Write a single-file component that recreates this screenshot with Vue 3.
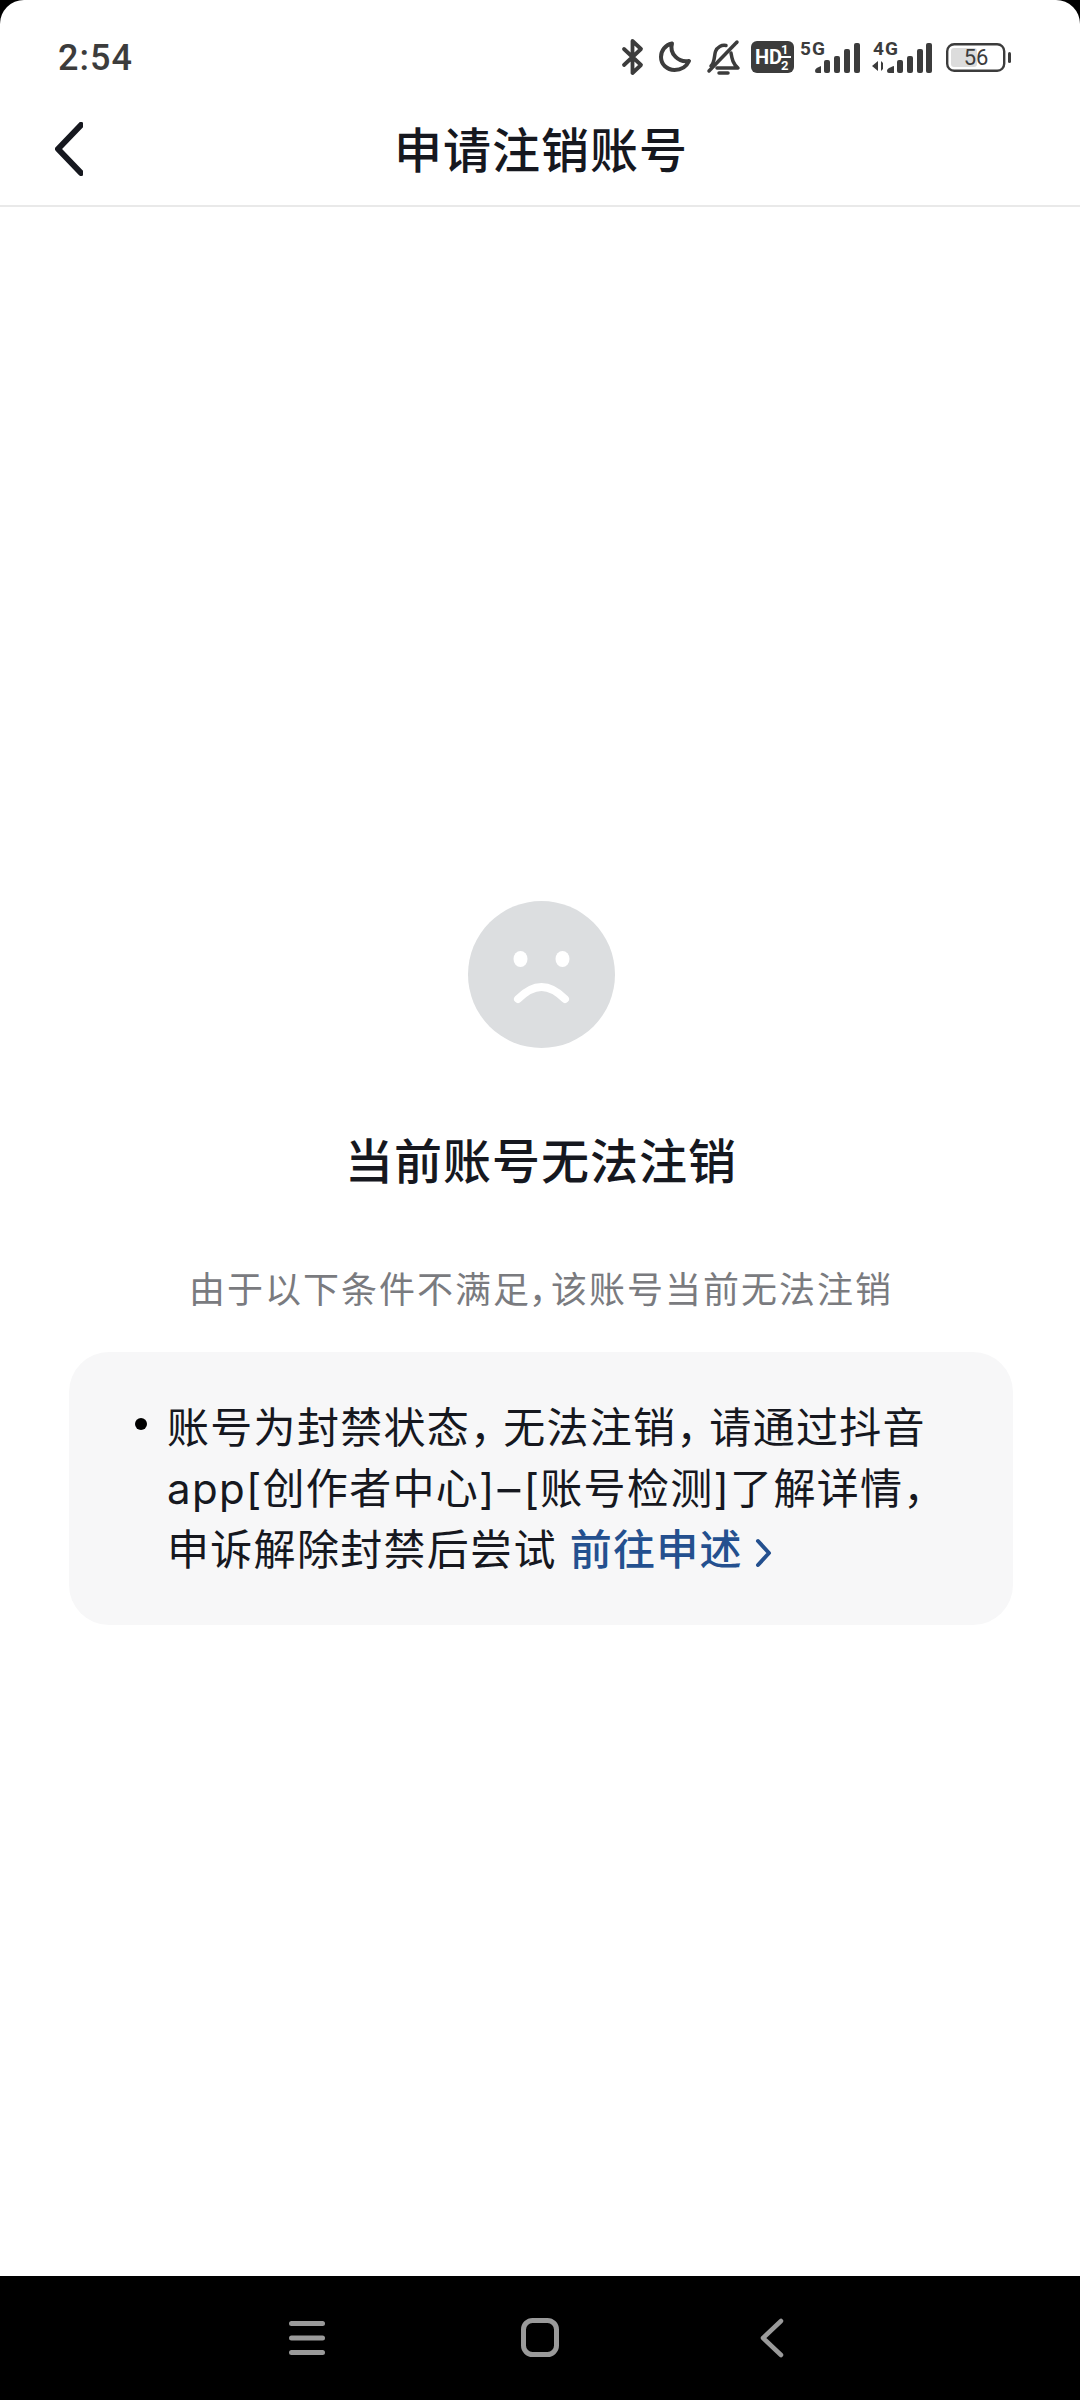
<script setup>
const title = '申请注销账号'
</script>

<template>
  <div class="screen">
    <div class="page">
      <div class="status-bar">
        <span class="time">2:54</span>
        <div class="status-icons">
          <svg class="ic-bt" viewBox="0 0 21 36" fill="none" stroke="#3c3c3c" stroke-width="3.800" stroke-linecap="round" stroke-linejoin="round">
            <path d="M2 10 19 26 10.500 34V2L19 10 2 26" />
          </svg>
          <svg class="ic-moon" viewBox="0 0 32 31" fill="none" stroke="#3c3c3c" stroke-width="4" stroke-linejoin="round">
            <path d="M13 2.500C6 4 2 10 2 16c0 7.500 6 13 13.500 13C22 29 27.500 25.500 30 20 20 22 10 13 13 2.500Z" />
          </svg>
          <svg class="ic-bell" viewBox="0 0 33 35" fill="none" stroke="#3c3c3c" stroke-width="3.500" stroke-linecap="round" stroke-linejoin="round">
            <path d="M4 26C8 22 7 16 8.500 11.500 10 7 15 4.500 19 5.500" />
            <path d="M24 13C25 19 26 24 31 28H10" />
            <path d="M12 33h9" />
            <path d="M2 31 30 2" />
          </svg>
          <svg class="ic-hd" viewBox="0 0 43 32">
            <rect width="43" height="32" rx="6" fill="#3c3c3c" />
            <text x="4" y="23" class="hd-text">HD</text>
            <text x="30" y="13" class="hd-small">1</text>
            <text x="30" y="29" class="hd-small">2</text>
            <rect x="29" y="15" width="11" height="2" fill="#fff" />
          </svg>
          <svg class="ic-signal" viewBox="0 0 60 31">
            <text x="0" y="13" class="net-text">5G</text>
            <path d="M15 29c0-2 2-3.500 6-5v7h-4a2 2 0 0 1-2-2Z" fill="#3c3c3c" />
            <rect x="24" y="18" width="6" height="13" rx="2" fill="#3c3c3c" />
            <rect x="34" y="14" width="6" height="17" rx="2" fill="#3c3c3c" />
            <rect x="44" y="7" width="6" height="24" rx="2" fill="#3c3c3c" />
            <rect x="54" y="1" width="6" height="30" rx="2" fill="#3c3c3c" />
          </svg>
          <svg class="ic-signal" viewBox="0 0 60 31">
            <text x="1" y="13" class="net-text">4G</text>
            <path d="M6 19v10L0 24ZM9 19v10l2-2v-6Z" fill="#3c3c3c" />
            <path d="M15 29c0-2 2-3.500 7-5v7h-5a2 2 0 0 1-2-2Z" fill="#3c3c3c" />
            <rect x="25" y="18" width="6" height="13" rx="2" fill="#3c3c3c" />
            <rect x="35" y="14" width="6" height="17" rx="2" fill="#3c3c3c" />
            <rect x="45" y="7" width="6" height="24" rx="2" fill="#3c3c3c" />
            <rect x="54" y="1" width="6" height="30" rx="2" fill="#3c3c3c" />
          </svg>
          <svg class="ic-battery" viewBox="0 0 65 29">
            <rect x="1.200" y="1.200" width="57" height="26.600" rx="7" fill="#fff" stroke="#3c3c3c" stroke-width="2.400" />
            <rect x="5" y="5" width="26" height="19" rx="3" fill="#dcdcdc" />
            <rect x="62" y="9" width="3" height="11" rx="1.500" fill="#3c3c3c" />
            <text x="30" y="22" class="bat-text">56</text>
          </svg>
        </div>
      </div>

      <header class="nav">
        <svg class="back" viewBox="0 0 28 54" fill="none" stroke="#16181f" stroke-width="6" stroke-linecap="round" stroke-linejoin="round">
          <path d="M26 3 3 27l23 24" />
        </svg>
        <h1 class="nav-title">{{ title }}</h1>
      </header>

      <main class="content">
        <svg class="face" viewBox="0 0 147 147">
          <circle cx="73.500" cy="73.500" r="73.500" fill="#dcdee0" />
          <ellipse cx="52.500" cy="58" rx="7" ry="8" fill="#fff" />
          <ellipse cx="94.500" cy="58" rx="7" ry="8" fill="#fff" />
          <path d="M50 98C58 90 65 86 73.500 86S89 90 97 98" fill="none" stroke="#fff" stroke-width="8" stroke-linecap="round" />
        </svg>
        <h2 class="heading">当前账号无法注销</h2>
        <p class="sub">由于以下条件不满足，该账号当前无法注销</p>
        <div class="card">
          <span class="dot"></span>
          <p class="reason">账号为封禁状态<span class="comma">，</span>无法注销<span class="comma">，</span>请通过抖音<br />app[创作者中心]<span class="dash">-</span>[账号检测]了解详情<span class="comma">，</span><br />申诉解除封禁后尝试<a class="link">前往申述<svg class="link-arrow" viewBox="0 0 17 30" fill="none" stroke="#24508f" stroke-width="4" stroke-linecap="round" stroke-linejoin="round"><path d="M3 3 14 15 3 27" /></svg></a></p>
        </div>
      </main>
    </div>

    <nav class="sys-nav">
      <svg class="sys-menu" viewBox="0 0 36 34" fill="#9a9a9a">
        <rect y="0" width="36" height="5" rx="2.500" />
        <rect y="14.500" width="36" height="5" rx="2.500" />
        <rect y="29" width="36" height="5" rx="2.500" />
      </svg>
      <svg class="sys-home" viewBox="0 0 38 39" fill="none" stroke="#9a9a9a" stroke-width="5">
        <rect x="2.500" y="2.500" width="33" height="34" rx="9" />
      </svg>
      <svg class="sys-back" viewBox="0 0 24 40" fill="none" stroke="#9a9a9a" stroke-width="4.500" stroke-linecap="round" stroke-linejoin="round">
        <path d="M21 3 3 20l18 17" />
      </svg>
    </nav>
  </div>
</template>

<style>
body {
  background: #000;
}
</style>

<style scoped>
.screen {
  width: 1080px;
  height: 2400px;
  display: flex;
  flex-direction: column;
  background: #000;
  font-family: Roboto, "Noto Sans CJK SC", sans-serif;
}
.page {
  flex: 1;
  background: #fff;
  border-radius: 24px 24px 0 0;
}
.status-bar {
  height: 107px;
  box-sizing: border-box;
  padding: 39px 69px 0 58px;
  display: flex;
  justify-content: space-between;
}
.time {
  font-size: 36px;
  font-weight: 500;
  line-height: 38px;
  letter-spacing: 1px;
  color: #3c3c3c;
}
.status-icons {
  display: flex;
  align-items: flex-start;
}
.status-icons svg {
  display: block;
  overflow: visible;
}
.ic-bt {
  width: 21px;
  height: 36px;
  margin-right: 16px;
}
.ic-moon {
  width: 32px;
  height: 31px;
  margin: 2px 16px 0 0;
}
.ic-bell {
  width: 33px;
  height: 35px;
  margin: 1px 11px 0 0;
}
.ic-hd {
  width: 43px;
  height: 32px;
  margin: 2px 6px 0 0;
}
.ic-signal {
  width: 60px;
  height: 31px;
  margin: 3px 12px 0 0;
}
.ic-battery {
  width: 65px;
  height: 29px;
  margin: 4px 0 0 2px;
}
.hd-text {
  font: 700 20px Roboto, sans-serif;
  fill: #fff;
}
.hd-small {
  font: 700 13px Roboto, sans-serif;
  fill: #fff;
}
.net-text {
  font: 700 19px Roboto, sans-serif;
  letter-spacing: 1px;
  fill: #3c3c3c;
}
.bat-text {
  font: 400 22px Roboto, sans-serif;
  fill: #3c3c3c;
  text-anchor: middle;
}
.nav {
  height: 100px;
  box-sizing: border-box;
  border-bottom: 2px solid #e9e9e9;
  position: relative;
  display: flex;
  align-items: center;
  justify-content: center;
}
.back {
  position: absolute;
  left: 55px;
  top: 15px;
  width: 28px;
  height: 54px;
}
.nav-title {
  margin: 0;
  font-size: 48px;
  font-weight: 500;
  line-height: 60px;
  letter-spacing: 1px;
  color: #16181f;
  padding: 0 0 9px 2px;
}
.content {
  display: flex;
  flex-direction: column;
  align-items: center;
  padding: 694px 67px 0 69px;
}
.face {
  width: 147px;
  height: 147px;
  display: block;
}
.heading {
  margin: 82px 0 0;
  font-size: 48px;
  font-weight: 500;
  line-height: 66px;
  letter-spacing: 1px;
  color: #16181f;
}
.sub {
  margin: 71px 0 0;
  font-size: 36px;
  line-height: 48px;
  color: #7a7b7f;
  font-feature-settings: "palt";
  letter-spacing: 2px;
}
.card {
  margin-top: 37px;
  width: 100%;
  height: 273px;
  box-sizing: border-box;
  padding: 45px 40px 45px 66px;
  background: #f7f7f8;
  border-radius: 40px;
  display: flex;
  gap: 20px;
}
.dot {
  flex: none;
  width: 12px;
  height: 12px;
  margin-top: 21px;
  border-radius: 50%;
  background: #000;
}
.reason {
  margin: 0;
  font-family: Inter, "Noto Sans CJK SC", sans-serif;
  font-size: 42px;
  line-height: 61px;
  letter-spacing: 1.300px;
  color: #16181f;
  white-space: nowrap;
}
.comma {
  letter-spacing: -9px;
}
.dash {
  display: inline-block;
  width: 28px;
  text-align: center;
  transform: scaleX(1.700);
}
.link {
  color: #24508f;
  font-weight: 500;
  margin-left: 13px;
}
.link-arrow {
  width: 17px;
  height: 30px;
  margin-left: 12px;
  vertical-align: -3px;
}
.sys-nav {
  height: 124px;
  flex: none;
  background: #000;
  position: relative;
}
.sys-nav svg {
  position: absolute;
}
.sys-menu {
  left: 289px;
  top: 45px;
  width: 36px;
  height: 34px;
}
.sys-home {
  left: 521px;
  top: 42px;
  width: 38px;
  height: 39px;
}
.sys-back {
  left: 760px;
  top: 42px;
  width: 24px;
  height: 40px;
}
</style>
